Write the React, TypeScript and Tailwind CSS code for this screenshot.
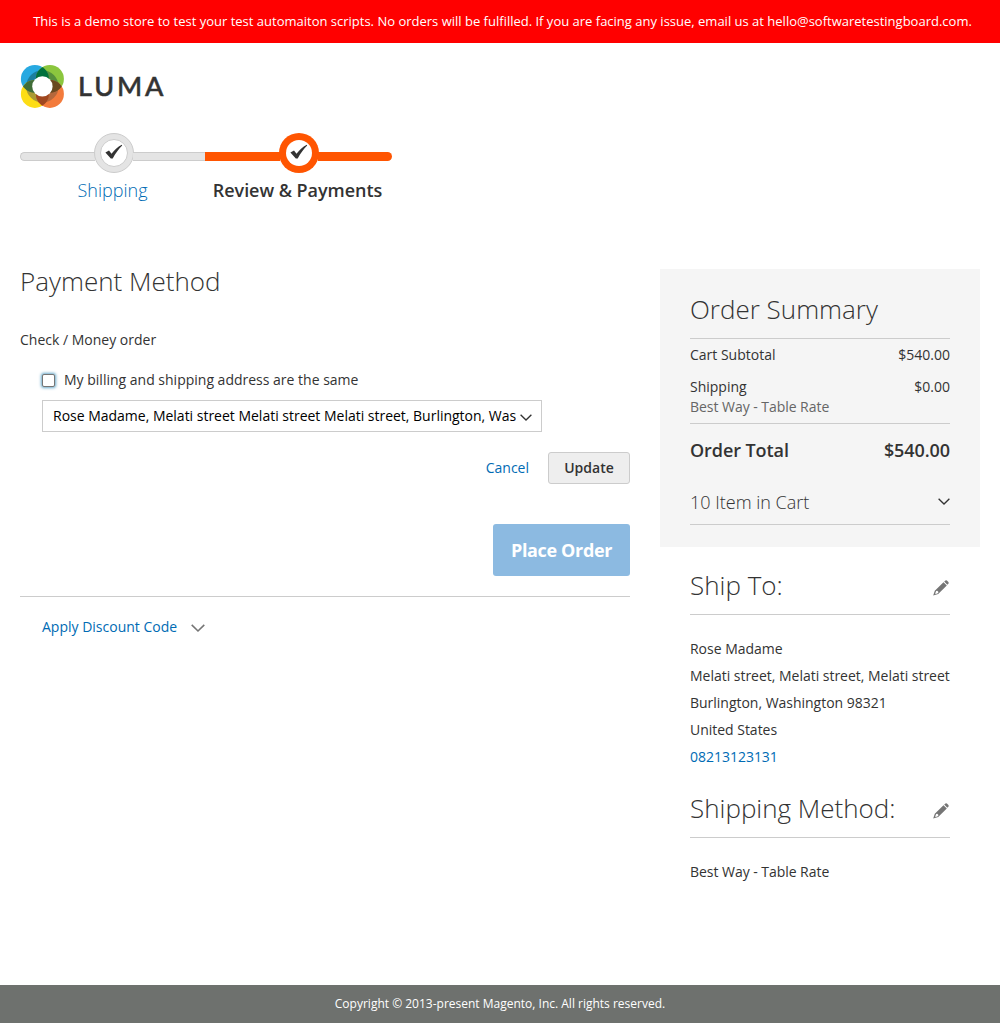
import React from "react";

function LumaLogo() {
  return (
    <div className="flex h-[44px] items-center">
      <svg width="44" height="44" viewBox="-0.4 -0.4 44 44" className="shrink-0">
        <defs>
          <clipPath id="tl"><circle cx="14.5" cy="14.5" r="14" /></clipPath>
          <clipPath id="tr"><circle cx="29.5" cy="14.5" r="14" /></clipPath>
          <clipPath id="bl"><circle cx="14.5" cy="29.5" r="14" /></clipPath>
          <clipPath id="br"><circle cx="29.5" cy="29.5" r="14" /></clipPath>
        </defs>
        <circle cx="14.5" cy="14.5" r="14" fill="#27a9e1" />
        <circle cx="29.5" cy="14.5" r="14" fill="#8bc63e" />
        <circle cx="14.5" cy="29.5" r="14" fill="#fddd16" />
        <circle cx="29.5" cy="29.5" r="14" fill="#f37b3c" />
        <g clipPath="url(#tl)"><circle cx="22" cy="22" r="16.2" fill="#1c7f9e" /></g>
        <g clipPath="url(#tr)"><circle cx="22" cy="22" r="16.2" fill="#548f3c" /></g>
        <g clipPath="url(#bl)"><circle cx="22" cy="22" r="16.2" fill="#aa9a33" /></g>
        <g clipPath="url(#br)"><circle cx="22" cy="22" r="16.2" fill="#b5683c" /></g>
        <g clipPath="url(#tl)"><circle cx="29.5" cy="14.5" r="14" fill="#00703c" /></g>
        <g clipPath="url(#tl)"><circle cx="14.5" cy="29.5" r="14" fill="#3f6d38" /></g>
        <g clipPath="url(#tr)"><circle cx="29.5" cy="29.5" r="14" fill="#69491f" /></g>
        <g clipPath="url(#bl)"><circle cx="29.5" cy="29.5" r="14" fill="#a0471f" /></g>
        <circle cx="22" cy="22" r="10.2" fill="#fff" />
      </svg>
      <span className="ml-[14px] font-['Lato'] text-[27px] leading-[44px] font-medium tracking-[2.9px] text-[#333] [-webkit-text-stroke:0.5px_#333]">LUMA</span>
    </div>
  );
}

function Check() {
  return (
    <svg width="18" height="16" viewBox="0 0 18 16" className="relative -top-px">
      <path d="M0.4 8.4 L4 6.4 L6.5 9.8 C9.2 6.3 12.6 2.8 16.8 0.8 L17.2 1.6 C13.6 5.2 10.4 9.6 7.7 14.6 L5.8 14.6 Z" fill="#333" />
    </svg>
  );
}

function Chevron({ color, size }: { color: string; size: number }) {
  return (
    <svg width={size} height={size * 0.6} viewBox="0 0 12 7.2" fill="none" stroke={color} strokeWidth="1.35">
      <path d="M0.6 0.8 L6 6 L11.4 0.8" />
    </svg>
  );
}

function Pencil() {
  return (
    <svg width="16" height="16" viewBox="0 0 16 16" fill="#757575">
      <path d="M11.2 1.6 L12.5 0.4 Q13.2 0 13.9 0.6 L15.4 2.1 Q16 2.8 15.5 3.5 L14.3 4.7 Z" />
      <path fillRule="evenodd" d="M10.5 2.2 L13.8 5.5 L5.2 14 L0.2 15.6 L1.8 10.7 Z M3.1 10.9 L2.2 13.4 L2.8 13.9 L5.2 13 L5.3 11.8 L4.2 10.8 Z" />
    </svg>
  );
}

function Row({ label, value }: { label: string; value: string }) {
  return (
    <div className="flex justify-between leading-5">
      <span>{label}</span>
      <span>{value}</span>
    </div>
  );
}

function SideHeading({ title }: { title: string }) {
  return (
    <div className="flex h-[50px] justify-between border-b border-[#ccc]">
      <h2 className="text-[26px] leading-[40px] font-light">{title}</h2>
      <button className="mt-[15px] mr-px h-4" aria-label="Edit"><Pencil /></button>
    </div>
  );
}

export default function App() {
  return (
    <div className="flex h-[1023px] w-[1000px] flex-col bg-white font-['Open_Sans',sans-serif] text-[14px] text-[#333]">
      <div className="h-[43px] shrink-0 bg-[#f00] pl-[5px] text-center text-[13px] leading-[43px] whitespace-nowrap text-white">
        This is a demo store to test your test automaiton scripts. No orders will be fulfilled. If you are facing any issue, email us at hello@softwaretestingboard.com.
      </div>

      <header className="px-5 pt-[21px]"><LumaLogo /></header>

      <nav className="mt-[25px] flex h-[72px] px-5">
        <div className="flex w-[185px] flex-col items-center">
          <div className="flex h-10 w-full items-center">
            <div className="mt-[7px] h-[9px] w-[75px] rounded-l-full border border-r-0 border-[#ccc] bg-[#e4e4e4]" />
            <div className="-mx-px flex size-10 shrink-0 items-center justify-center rounded-full border border-[#ccc] bg-[#e4e4e4]">
              <div className="flex size-7 items-center justify-center rounded-full border border-[#ccc] bg-white"><Check /></div>
            </div>
            <div className="mt-[7px] h-[9px] grow border-y border-[#ccc] bg-[#e4e4e4]" />
          </div>
          <span className="mt-1 text-[18px] leading-[26px] font-light text-[#006bb4]">Shipping</span>
        </div>
        <div className="flex w-[187px] flex-col items-center">
          <div className="flex h-10 w-full items-center">
            <div className="mt-[7px] h-[9px] w-[75px] bg-[#ff5501]" />
            <div className="-mx-px flex size-10 shrink-0 items-center justify-center rounded-full bg-[#ff5501]">
              <div className="flex size-[26px] items-center justify-center rounded-full bg-white"><Check /></div>
            </div>
            <div className="mt-[7px] h-[9px] grow rounded-r-full bg-[#ff5501]" />
          </div>
          <span className="mt-1 mr-[2px] text-[18px] leading-[26px] font-semibold tracking-[-0.05px] whitespace-nowrap">Review &amp; Payments</span>
        </div>
      </nav>

      <main className="mt-[64px] flex grow justify-between px-5">
        <section className="w-[610px]">
          <h1 className="h-[26px] text-[26px] leading-[24px] font-light">Payment Method</h1>
          <p className="mt-[35px] leading-5">Check / Money order</p>
          <label className="mt-5 flex h-5 items-center pl-[22px]">
            <span className="size-[13px] rounded-[2px] border border-[#767676] bg-white shadow-[0_0_3px_1px_#68a8c8]" />
            <span className="ml-[9px] pb-[2px]">My billing and shipping address are the same</span>
          </label>
          <div className="mt-[10px] ml-[22px] flex h-8 w-[500px] items-center justify-between border border-[#ccc] pr-[9px] pl-[10px] text-black">
            <span className="w-[463px] overflow-hidden pb-px tracking-[-0.01px] whitespace-nowrap">Rose Madame, Melati street Melati street Melati street, Burlington, Was</span>
            <span className="mt-[3px]"><Chevron color="#333" size={12} /></span>
          </div>
          <div className="mt-5 flex items-center justify-end">
            <a className="mr-[19px] pb-[2px] text-[#006bb4]">Cancel</a>
            <button className="h-8 w-[82px] rounded-[3px] border border-[#ccc] bg-[#eee] pb-[2px] font-semibold">Update</button>
          </div>
          <div className="mt-10 flex h-[73px] items-start justify-end border-b border-[#ccc]">
            <button className="h-[52px] w-[137px] rounded-[3px] bg-[#8cbae1] text-[18px] font-bold tracking-[-0.35px] text-white">Place Order</button>
          </div>
          <div className="mt-[19px] flex h-5 items-center pl-[22px] text-[#006bb4]">
            Apply Discount Code
            <span className="mt-[5px] ml-[14px]"><Chevron color="#757575" size={14} /></span>
          </div>
        </section>

        <aside className="w-[320px]">
          <div className="h-[278px] bg-[#f5f5f5] px-[30px] pt-[22px]">
            <h2 className="h-[48px] border-b border-[#ccc] text-[26px] leading-[36px] font-light">Order Summary</h2>
            <div className="mt-[6px]"><Row label="Cart Subtotal" value="$540.00" /></div>
            <div className="mt-3"><Row label="Shipping" value="$0.00" /></div>
            <div className="h-[27px] border-b border-[#ccc] leading-5 tracking-[-0.04px] text-[#666]">Best Way - Table Rate</div>
            <div className="mt-[16px] text-[18px] font-semibold tracking-[-0.08px]"><Row label="Order Total" value="$540.00" /></div>
            <div className="mt-[30px] flex h-[35px] items-start justify-between border-b border-[#ccc] text-[18px] leading-[24px] font-light">
              10 Item in Cart
              <span className="mt-[8px] leading-none"><Chevron color="#333" size={12} /></span>
            </div>
          </div>
          <div className="px-[30px] pt-[18px]">
            <SideHeading title="Ship To:" />
            <address className="mt-5 leading-[27px] tracking-[-0.02px] whitespace-nowrap not-italic">
              Rose Madame<br />Melati street, Melati street, Melati street<br />Burlington, Washington 98321<br />United States<br />
              <a className="text-[#006bb4]">08213123131</a>
            </address>
            <div className="mt-[18px]"><SideHeading title="Shipping Method:" /></div>
            <p className="mt-5 leading-[27px] tracking-[-0.04px]">Best Way - Table Rate</p>
          </div>
        </aside>
      </main>

      <footer className="h-[38px] shrink-0 bg-[#6e716e] text-center text-[12px] leading-[37px] text-white">
        Copyright © 2013-present Magento, Inc. All rights reserved.
      </footer>
    </div>
  );
}
